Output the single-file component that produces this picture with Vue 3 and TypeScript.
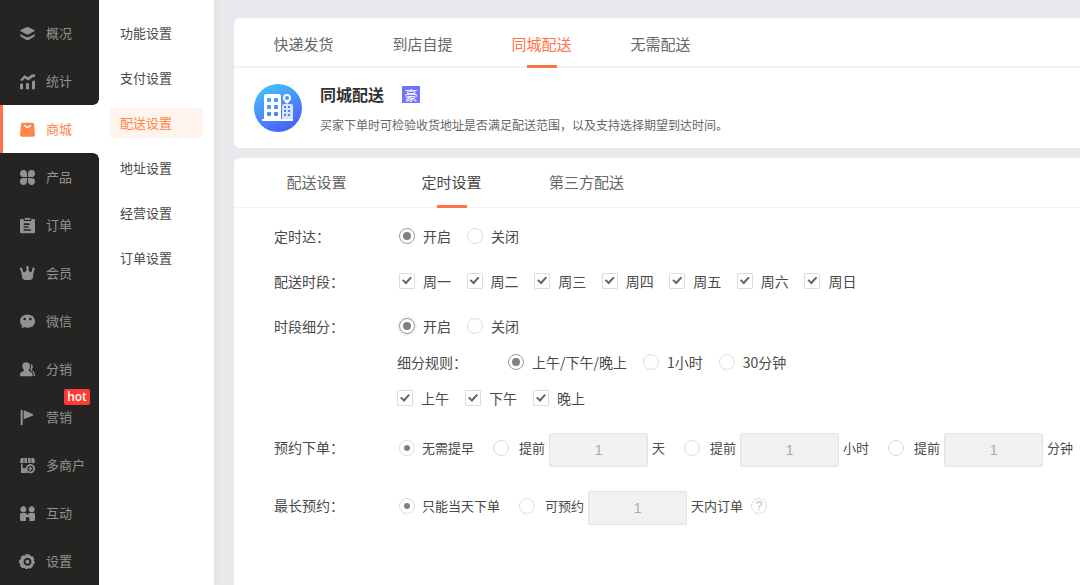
<script setup lang="ts">
import { ref } from 'vue'

interface NavItem {
  label: string
  icon: string
  badge?: string
}

const navItems: NavItem[] = [
  {
    label: '概况',
    icon: 'M19 4Q22.5 2 26 4L43 12Q46 14 43 16L26 25Q22.500 27 19 25L2 16Q-1 14 2 12ZM0 24Q9 28 18 33Q22.500 35 27 33Q36 28 45 24Q45 30 41 33L27 41Q22.500 43 18 41L4 33Q0 30 0 24Z',
  },
  {
    label: '统计',
    icon: 'M0 31q4-4 9-2v17H2q-2 0-2-2zM18 26q4 3 9 0v20h-9zM36 23q4-4 9-3v24q0 2-2 2h-7zM0 18L13 4Q15 3 17 5L24 10L34 2Q37 0 45 1V9Q41 8 38 10L27 18Q24 20 21 18L15 13L8 20Q3 21 0 18Z',
  },
  {
    label: '商城',
    icon: 'M8 2h29q5 0 5 5l3 31q0 6-6 6H6q-6 0-6-6L3 7q0-5 5-5zM10 9q12 20 25 0l-4-1q-8 9-17 0z',
  },
  {
    label: '产品',
    icon: 'M10 0Q21 0 21 12V21H12Q0 21 0 11Q0 0 10 0ZM35 0Q45 0 45 11Q45 21 33 21H24V12Q24 0 35 0ZM12 24H21V33Q21 45 10 45Q0 45 0 34Q0 24 12 24ZM24 24H33Q45 24 45 34Q45 45 35 45Q24 45 24 33Z',
  },
  {
    label: '订单',
    icon: 'M4 3h7v6h23V3h7q4 0 4 4v35q0 4-4 4H4q-4 0-4-4V7q0-4 4-4zM14 0h17v5H14zM11 16v5h18v-5zM11 25v4h14v-4zM11 34v4h22v-4z',
  },
  {
    label: '会员',
    icon: 'M22 0a5 5 0 0 1 3 9q1 9 6 10q4 0 6-8a4 4 0 1 1 6 1q-3 6-4 22q-1 8-8 8H14q-7 0-8-8Q5 18 1 12a4 4 0 1 1 6-1q3 8 7 8q5-1 6-10a5 5 0 0 1 2-9z',
  },
  {
    label: '微信',
    icon: 'M22 2C36 2 45 10 45 22S36 41 22 41Q16 41 13 39L5 43L6 35Q0 29 0 21C0 10 9 2 22 2ZM14 11a4 4 0 1 0 .1 0zM31 11a4 4 0 1 0 .1 0z',
  },
  {
    label: '分销',
    icon: 'M18 1Q30 1 30 14Q30 20 26 24Q26 28 36 32Q38 33 38 43H0Q-1 33 3 31Q12 28 12 24Q7 20 7 13Q7 1 18 1ZM32 5Q40 8 38 17Q37 20 35 22Q35 26 42 29Q45 31 45 42H41Q41 30 36 28Q29 26 32 19Q35 12 32 5Z',
  },
  { label: '营销', icon: 'M2 0h6v45H2zM11 3Q11 0 15 2L38 12Q42 15 38 17L11 28Z', badge: 'hot' },
  {
    label: '多商户',
    icon: 'M3 0h8v15Q0 17 0 11zM13 0h8v15h-8zM24 0h8v15h-8zM34 0h8l3 11q0 6-11 4zM3 19h5v12h9Q16 40 23 45H3zM31 18a14 14 0 1 0 .1 0zM31 23a9 9 0 1 1-.1 0zM29 26h4v4h4v4h-4v4h-4v-4h-4v-4h4z',
  },
  {
    label: '互动',
    icon: 'M10 0a10 10 0 0 1 6 17q-6 4-12 0A10 10 0 0 1 10 0zM35 0a10 10 0 0 1 6 17q-6 4-12 0A10 10 0 0 1 35 0zM4 21h12q4 0 5 5h3q1-5 5-5h12q4 0 4 5v15q0 4-4 4H28V34H18v11H4q-4 0-4-4V26q0-5 4-5z',
  },
  {
    label: '设置',
    icon: 'M17 1h11l3 5l7 1l5 8l-2 5l4 3l-3 8l-3 1l-1 7l-8 5l-5-2l-2 3h-7l-2-3l-7 1l-7-7l1-6l-4-3v-8l5-3l1-8l7-4l4 1zM22.500 11a12 12 0 1 0 .1 0zM22.500 17a6 6 0 1 1-.1 0z',
  },
]
const activeNav = ref('商城')

const subItems = ['功能设置', '支付设置', '配送设置', '地址设置', '经营设置', '订单设置']
const activeSub = ref('配送设置')

const methodTabs = ['快递发货', '到店自提', '同城配送', '无需配送']
const activeMethod = ref('同城配送')

const settingTabs = ['配送设置', '定时设置', '第三方配送']
const activeSetting = ref('定时设置')

const switches = ['开启', '关闭']
const timed = ref('开启')
const split = ref('开启')

const weekdays = ['周一', '周二', '周三', '周四', '周五', '周六', '周日']
const days = ref([...weekdays])

const rules = ['上午/下午/晚上', '1小时', '30分钟']
const rule = ref(rules[0])

const periods = ['上午', '下午', '晚上']
const activePeriods = ref([...periods])

const advanceUnits = ['天', '小时', '分钟']
const advance = ref('none')
const amounts = ref(['1', '1', '1'])
const longest = ref('today')
const longestDays = ref('1')
</script>

<template>
  <div class="page">
    <nav class="sidebar" aria-label="主导航">
      <a
        v-for="item in navItems"
        :key="item.label"
        href="#"
        class="nav-item"
        :class="{ active: item.label === activeNav }"
        @click.prevent="activeNav = item.label"
      >
        <svg class="nav-icon" viewBox="0 0 45 45" aria-hidden="true">
          <path :d="item.icon" fill="currentColor" fill-rule="evenodd" />
        </svg>
        <span class="nav-label">{{ item.label }}</span>
        <span v-if="item.badge" class="hot">{{ item.badge }}</span>
      </a>
    </nav>

    <nav class="submenu" aria-label="商城设置">
      <a
        v-for="item in subItems"
        :key="item"
        href="#"
        class="sub-item"
        :class="{ active: item === activeSub }"
        @click.prevent="activeSub = item"
        >{{ item }}</a
      >
    </nav>

    <main class="content">
      <section class="card">
        <div class="tabs method-tabs">
          <button
            v-for="tab in methodTabs"
            :key="tab"
            type="button"
            class="tab"
            :class="{ active: tab === activeMethod }"
            @click="activeMethod = tab"
          >
            {{ tab }}
          </button>
        </div>
        <div class="intro">
          <svg class="intro-icon" viewBox="0 0 48 48" aria-hidden="true">
            <defs>
              <linearGradient id="sky" x1="0.2" y1="0" x2="0.7" y2="1">
                <stop offset="0" stop-color="#45c4fb" />
                <stop offset="1" stop-color="#4a5cfb" />
              </linearGradient>
            </defs>
            <circle cx="24" cy="24" r="24" fill="url(#sky)" />
            <path d="M28 37V22q0-2 2-2h7q2 0 2 2v15z" fill="#d6e4ff" />
            <path
              d="M10 35V12q0-2 2-2h13q2 0 2 2v23h12v2H8v-2zM14 14q-1 0-1 1v2q0 1 1 1h2q1 0 1-1v-2q0-1-1-1zM21 14q-1 0-1 1v2q0 1 1 1h2q1 0 1-1v-2q0-1-1-1zM14 21q-1 0-1 1v2q0 1 1 1h2q1 0 1-1v-2q0-1-1-1zM21 21q-1 0-1 1v2q0 1 1 1h2q1 0 1-1v-2q0-1-1-1zM14 28q-1 0-1 1v2q0 1 1 1h2q1 0 1-1v-2q0-1-1-1zM21 28q-1 0-1 1v2q0 1 1 1h2q1 0 1-1v-2q0-1-1-1z"
              fill="#fff"
              fill-rule="evenodd"
            />
            <path
              d="M30 22h2v2h-2zM34 22h2v2h-2zM30 26h2v2h-2zM34 26h2v2h-2zM30 30h2v2h-2zM34 30h2v2h-2z"
              fill="#4b82fb"
            />
            <path
              d="M33 10a4 4 0 0 1 4 4q0 2-4 6q-4-4-4-6a4 4 0 0 1 4-4zM33 12a2 2 0 1 0 .1 0z"
              fill="#fff"
              fill-rule="evenodd"
            />
          </svg>
          <div>
            <div class="intro-head">
              <h1>同城配送</h1>
              <span class="tier">豪</span>
            </div>
            <p>买家下单时可检验收货地址是否满足配送范围，以及支持选择期望到达时间。</p>
          </div>
        </div>
      </section>

      <section class="card settings">
        <div class="tabs setting-tabs">
          <button
            v-for="tab in settingTabs"
            :key="tab"
            type="button"
            class="tab"
            :class="{ active: tab === activeSetting }"
            @click="activeSetting = tab"
          >
            {{ tab }}
          </button>
        </div>

        <form class="form" @submit.prevent>
          <div class="row" role="radiogroup" aria-labelledby="l-timed">
            <span id="l-timed" class="row-label">定时达：</span>
            <div class="options">
              <label v-for="s in switches" :key="s" class="option">
                <input v-model="timed" type="radio" name="timed" :value="s" />{{ s }}
              </label>
            </div>
          </div>

          <div class="row" role="group" aria-labelledby="l-days">
            <span id="l-days" class="row-label">配送时段：</span>
            <div class="options week">
              <label v-for="d in weekdays" :key="d" class="option">
                <input v-model="days" type="checkbox" :value="d" />{{ d }}
              </label>
            </div>
          </div>

          <div class="row" role="radiogroup" aria-labelledby="l-split">
            <span id="l-split" class="row-label">时段细分：</span>
            <div class="options">
              <label v-for="s in switches" :key="s" class="option">
                <input v-model="split" class="halo" type="radio" name="split" :value="s" />{{ s }}
              </label>
            </div>
          </div>

          <div class="sub-rows">
            <div class="sub-row" role="radiogroup" aria-labelledby="l-rule">
              <span id="l-rule" class="rule-label">细分规则：</span>
              <label v-for="r in rules" :key="r" class="option">
                <input v-model="rule" type="radio" name="rule" :value="r" />{{ r }}
              </label>
            </div>
            <div class="sub-row" role="group" aria-label="时段">
              <label v-for="p in periods" :key="p" class="option">
                <input v-model="activePeriods" type="checkbox" :value="p" />{{ p }}
              </label>
            </div>
          </div>

          <div class="book-row" role="radiogroup" aria-labelledby="l-advance">
            <span id="l-advance" class="row-label">预约下单：</span>
            <div class="choices">
              <label class="choice first">
                <input v-model="advance" type="radio" name="advance" value="none" />无需提早
              </label>
              <div v-for="(unit, i) in advanceUnits" :key="unit" class="entry">
                <label class="choice">
                  <input v-model="advance" type="radio" name="advance" :value="unit" />提前
                </label>
                <input
                  v-model="amounts[i]"
                  class="amount"
                  type="text"
                  :aria-label="`提前${unit}`"
                  :disabled="advance !== unit"
                />
                <span>{{ unit }}</span>
              </div>
            </div>
          </div>

          <div class="book-row" role="radiogroup" aria-labelledby="l-longest">
            <span id="l-longest" class="row-label">最长预约：</span>
            <div class="choices">
              <label class="choice first">
                <input v-model="longest" type="radio" name="longest" value="today" />只能当天下单
              </label>
              <div class="entry">
                <label class="choice">
                  <input v-model="longest" type="radio" name="longest" value="days" />可预约
                </label>
                <input
                  v-model="longestDays"
                  class="amount"
                  type="text"
                  aria-label="可预约天数"
                  :disabled="longest !== 'days'"
                />
                <span>天内订单</span>
                <button type="button" class="help" aria-label="帮助">?</button>
              </div>
            </div>
          </div>
        </form>
      </section>
    </main>
  </div>
</template>

<style>
body {
  margin: 0;
}
</style>

<style scoped>
.page {
  display: flex;
  min-height: 100vh;
  overflow: hidden;
  background: #e8e9ed;
  color: #4a4a4a;
  font-family: 'Noto Sans CJK SC', sans-serif;
  font-size: 14px;
}

.page *,
.page *::before,
.page *::after {
  box-sizing: border-box;
}

a {
  text-decoration: none;
}

button {
  padding: 0;
  border: 0;
  background: none;
  font-family: inherit;
  cursor: pointer;
}

.sidebar {
  flex: none;
  width: 99px;
  padding-top: 9px;
  background: #252422;
}

.nav-item {
  position: relative;
  display: flex;
  align-items: center;
  gap: 11px;
  height: 48px;
  padding-left: 20px;
  color: #929290;
  font-size: 13px;
  white-space: nowrap;
}

.nav-item.active {
  padding-left: 17px;
  border-left: 3px solid #ff7247;
  background: #fff;
  color: #ff8548;
}

.nav-item.active::before,
.nav-item.active::after {
  content: '';
  position: absolute;
  right: 0;
  width: 5px;
  height: 5px;
}

.nav-item.active::before {
  bottom: 100%;
  background: radial-gradient(circle at 0 0, transparent 4px, #fff 5px);
}

.nav-item.active::after {
  top: 100%;
  background: radial-gradient(circle at 0 100%, transparent 4px, #fff 5px);
}

.nav-icon {
  flex: none;
  width: 15px;
  height: 15px;
  overflow: visible;
}

.nav-label {
  padding-bottom: 2px;
}

.hot {
  position: absolute;
  top: -4px;
  left: 64px;
  width: 26px;
  border-radius: 2px;
  background: #ff3a30;
  color: #fff;
  font-family: 'Open Sans', 'Noto Sans', sans-serif;
  font-size: 12px;
  font-weight: 600;
  line-height: 16px;
  text-align: center;
}

.submenu {
  display: flex;
  flex: none;
  flex-direction: column;
  gap: 15px;
  width: 115px;
  padding: 18px 11px;
  background: #fff;
  box-shadow: 0 0 6px rgba(0, 0, 0, 0.08);
}

.sub-item {
  padding-left: 10px;
  border-radius: 4px;
  color: #4a4a4a;
  font-size: 13px;
  line-height: 30px;
}

.sub-item.active {
  background: #fff3ee;
  color: #ff8548;
}

.content {
  display: flex;
  flex: 1;
  flex-direction: column;
  gap: 10px;
  min-width: 0;
  padding: 18px 0 0 20px;
}

.card {
  border-radius: 6px 0 0 0;
  background: #fff;
}

.card:first-child {
  border-radius: 6px 0 0 6px;
}

.settings {
  flex: 1;
}

.tabs {
  display: flex;
  height: 50px;
  border-bottom: 2px solid #f2f2f2;
}

.method-tabs {
  padding-left: 10px;
}

.setting-tabs {
  padding-left: 15px;
  border-bottom-width: 1px;
}

.tab {
  position: relative;
  width: 119px;
  height: 50px;
  color: #666;
  font-size: 15px;
}

.setting-tabs .tab {
  width: 135px;
  padding-bottom: 4px;
}

.setting-tabs .tab.active {
  color: #4a4a4a;
}

.tab.active {
  color: #ff7247;
}

.tab.active::after {
  content: '';
  position: absolute;
  bottom: 0;
  left: 50%;
  width: 30px;
  height: 3px;
  margin-left: -15px;
  background: #ff7247;
}

.intro {
  display: flex;
  align-items: center;
  gap: 18px;
  height: 80px;
  padding-left: 20px;
}

.intro-icon {
  flex: none;
  width: 48px;
  height: 48px;
}

.intro-head {
  display: flex;
  align-items: center;
  gap: 18px;
}

h1 {
  margin: 0;
  color: #333;
  font-size: 16px;
  line-height: 30px;
}

.tier {
  width: 18px;
  background: #6f74f8;
  color: #fff;
  font-size: 13px;
  line-height: 17px;
  text-align: center;
}

p {
  margin: 0;
  padding-top: 4px;
  color: #666;
  font-size: 12px;
  line-height: 24px;
}

.form {
  padding: 5px 0 20px 40px;
  white-space: nowrap;
}

.row {
  display: flex;
  align-items: center;
  height: 45px;
}

.row-label {
  flex: none;
  width: 123px;
}

.options {
  display: flex;
  gap: 16px;
  padding-left: 2px;
}

.week {
  display: grid;
  grid-template-columns: repeat(7, 1fr);
  gap: 0;
  width: 475px;
}

.option {
  display: flex;
  align-items: center;
  gap: 8px;
}

.sub-rows {
  display: flex;
  flex-direction: column;
  gap: 8px;
  padding-left: 123px;
}

.sub-row {
  display: flex;
  align-items: center;
  gap: 16px;
  height: 28px;
}

.rule-label {
  width: 95px;
}

.book-row {
  display: flex;
  height: 34px;
  margin-top: 21px;
  line-height: 30px;
}

.book-row + .book-row {
  margin-top: 24px;
}

.book-row .row-label {
  line-height: 28px;
}

.choices {
  display: flex;
  gap: 19px;
  padding-left: 2px;
  font-size: 13px;
}

.choice {
  display: flex;
  align-items: center;
  gap: 10px;
  height: 30px;
}

.choice.first {
  gap: 7px;
}

.entry {
  display: flex;
  gap: 4px;
}

.amount {
  width: 99px;
  height: 34px;
  padding: 0;
  border: 1px solid #e2e3ea;
  border-radius: 2px;
  background: #f1f1f1;
  color: #aaa;
  font-family: 'Liberation Sans', sans-serif;
  font-size: 14px;
  text-align: center;
}

input[type='radio'],
input[type='checkbox'] {
  display: grid;
  flex: none;
  place-items: center;
  width: 16px;
  height: 16px;
  margin: 0;
  appearance: none;
  border: 1px solid #ddd;
  background: #fff;
}

input[type='radio'] {
  border-radius: 50%;
}

input[type='radio']:checked {
  border-color: #999;
}

input[type='radio']:checked::before {
  content: '';
  width: 8px;
  height: 8px;
  border-radius: 50%;
  background: #808080;
}

.halo:checked {
  box-shadow: 0 0 0 2px #f3f3f3;
}

.choice input[type='radio']:checked {
  border-color: #ddd;
}

.choice input[type='radio']:checked::before {
  width: 6px;
  height: 6px;
}

input[type='checkbox'] {
  border-radius: 1px;
}

input[type='checkbox']:checked::before {
  content: '';
  width: 10px;
  height: 8px;
  background: #666;
  clip-path: polygon(0 50%, 15% 35%, 38% 62%, 85% 0, 100% 15%, 40% 100%);
}

.help {
  width: 16px;
  height: 16px;
  margin: 7px 0 0 4px;
  border: 1px solid #ddd;
  border-radius: 50%;
  color: #bbb;
  font-family: 'Liberation Sans', sans-serif;
  font-size: 12px;
  line-height: 14px;
}
</style>
